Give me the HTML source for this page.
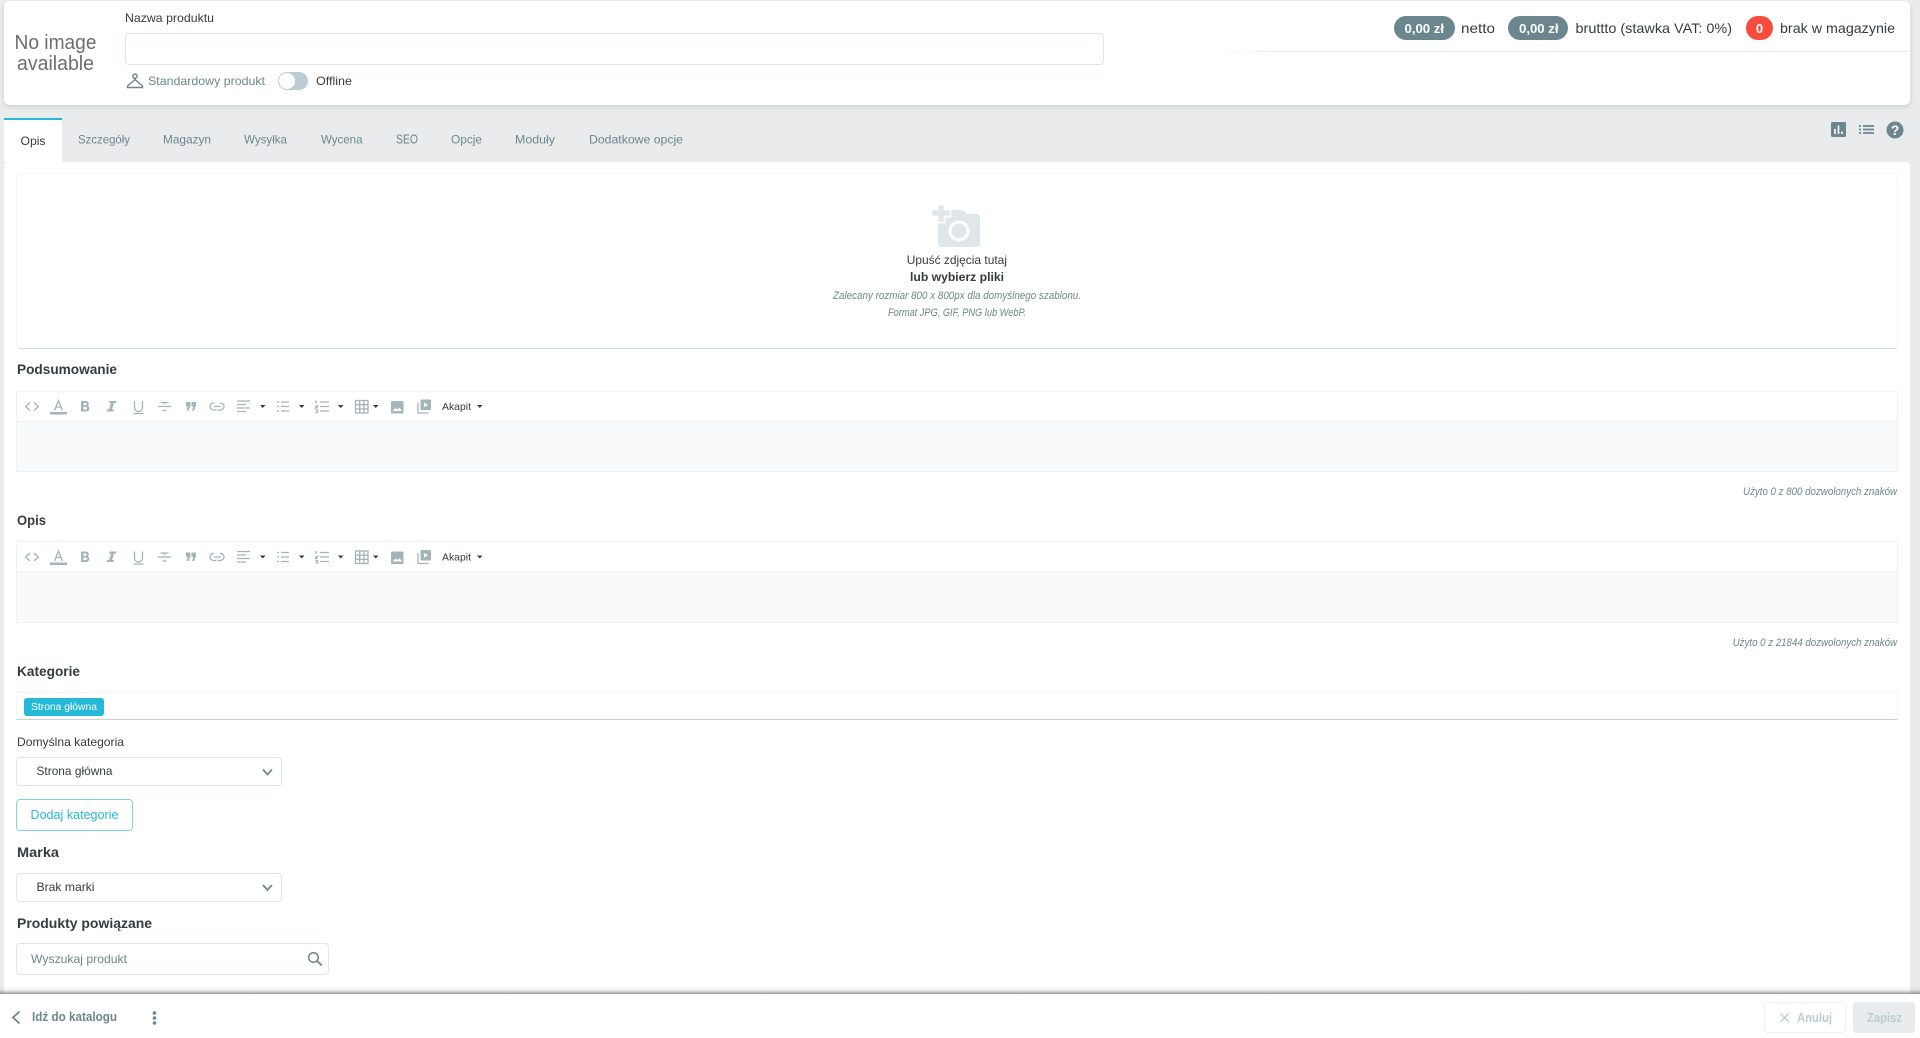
<!DOCTYPE html>
<html lang="pl"><head><meta charset="utf-8"><title>Produkt</title>
<style>
html,body{margin:0;padding:0;width:1920px;height:1038px;overflow:hidden;background:#eaebec;font-family:"Liberation Sans","DejaVu Sans",sans-serif}
.b{position:absolute;box-sizing:border-box}
svg{position:absolute;left:0;top:0}
text{font-family:"Liberation Sans","DejaVu Sans",sans-serif;fill:#363a41}
.g{fill:#6c868e}.w{fill:#fff}.h{font-weight:700;font-size:14px;fill:#363a41}
.i{font-style:italic;font-size:11px;fill:#6c868e}
.tb path,.tb rect,.tb line,.tb circle{stroke:#a3b4ba;fill:none;stroke-width:1.3}
.tb .f{fill:#a3b4ba;stroke:none}
.c{fill:#363a41;stroke:none}
</style></head><body>
<div class="b" style="left:4px;top:1px;width:1906px;height:104px;background:#fff;border-radius:5px;box-shadow:0 2px 5px rgba(0,0,0,.12)"></div>
<div class="b" style="left:1212px;top:51px;width:696px;height:1px;background:linear-gradient(90deg,#fff,#e3e8ea 12%)"></div>
<div class="b" style="left:125px;top:33px;width:979px;height:32px;border:1px solid #dde6e9;border-radius:4px;background:#fff"></div>
<div class="b" style="left:278px;top:72px;width:30px;height:18px;border-radius:9px;background:#bbcdd2"></div>
<div class="b" style="left:279px;top:73px;width:16px;height:16px;border-radius:50%;background:#fff"></div>
<div class="b" style="left:1394px;top:16px;width:61px;height:24px;border-radius:12px;background:#6c868e"></div>
<div class="b" style="left:1508px;top:16px;width:60px;height:24px;border-radius:12px;background:#6c868e"></div>
<div class="b" style="left:1746px;top:16px;width:27px;height:24px;border-radius:12px;background:#f54c3e"></div>
<div class="b" style="left:4px;top:162px;width:1906px;height:840px;background:#fff;border-radius:4px 4px 0 0"></div>
<div class="b" style="left:4px;top:118px;width:58px;height:44px;background:#fff;border-top:2px solid #25b9d7"></div>
<div class="b" style="left:16px;top:173px;width:1882px;height:176px;border:1px solid #f3f4f5;border-bottom:1px solid #d5e0e3;border-radius:4px"></div>
<div class="b" style="left:16px;top:391px;width:1882px;height:81px;border:1px solid #f1f1f1;border-radius:2px"></div>
<div class="b" style="left:17px;top:421px;width:1880px;height:50px;background:#f9fafb;border-top:1px solid #f1f1f1"></div>
<div class="b" style="left:16px;top:541px;width:1882px;height:82px;border:1px solid #f1f1f1;border-radius:2px"></div>
<div class="b" style="left:17px;top:571px;width:1880px;height:51px;background:#f9fafb;border-top:1px solid #f1f1f1"></div>
<div class="b" style="left:16px;top:692px;width:1882px;height:28px;border:1px solid #f3f4f5;border-bottom:1px solid #c6d4d8"></div>
<div class="b" style="left:24px;top:698px;width:80px;height:18px;background:#25b9d7;border-radius:3px"></div>
<div class="b" style="left:16px;top:757px;width:266px;height:29px;border:1px solid #dde6e9;border-radius:4px"></div>
<div class="b" style="left:16px;top:799px;width:117px;height:32px;border:1px solid #7fd3e5;border-radius:4px"></div>
<div class="b" style="left:16px;top:873px;width:266px;height:29px;border:1px solid #dde6e9;border-radius:4px"></div>
<div class="b" style="left:16px;top:943px;width:313px;height:32px;border:1px solid #dde6e9;border-radius:4px"></div>
<div class="b" style="left:0;top:986px;width:1920px;height:8px;background:linear-gradient(180deg,rgba(90,90,90,0),rgba(90,90,90,.08) 50%,rgba(90,90,90,.6))"></div>
<div class="b" style="left:0;top:994px;width:1920px;height:44px;background:#fff"></div>
<div class="b" style="left:1764px;top:1002px;width:82px;height:31px;border:1px solid #f1f1f1;border-radius:4px"></div>
<div class="b" style="left:1853px;top:1002px;width:62px;height:31px;background:#eaebec;border-radius:4px"></div>

<svg width="1920" height="1038" viewBox="0 0 1920 1038">
<text x="55.5" y="49" font-size="20" text-anchor="middle" style="fill:#6e6e6e" textLength="82" lengthAdjust="spacingAndGlyphs">No image</text>
<text x="55.5" y="70" font-size="20" text-anchor="middle" style="fill:#6e6e6e" textLength="77" lengthAdjust="spacingAndGlyphs">available</text>
<text x="125" y="22" font-size="12" textLength="89" lengthAdjust="spacingAndGlyphs">Nazwa produktu</text>
<path d="M135 78.5a2.2 2.2 0 1 1 2.2-2.2c0 1.2-2.2 1.6-2.2 3.2M135 79.5l-7.5 6.5v1.5h15V86z" fill="none" stroke="#6c868e" stroke-width="1.4"/>
<text class="g" x="148" y="85" font-size="12" textLength="117" lengthAdjust="spacingAndGlyphs">Standardowy produkt</text>
<text x="316" y="85" font-size="12" textLength="36" lengthAdjust="spacingAndGlyphs">Offline</text>

<text x="1404.5" y="33" font-size="13" font-weight="700" textLength="39.5" lengthAdjust="spacingAndGlyphs" style="fill:#fff">0,00 zł</text>
<text x="1461" y="33" font-size="14" textLength="34" lengthAdjust="spacingAndGlyphs">netto</text>
<text x="1519" y="33" font-size="13" font-weight="700" textLength="39.5" lengthAdjust="spacingAndGlyphs" style="fill:#fff">0,00 zł</text>
<text x="1575.5" y="33" font-size="14" textLength="156.5" lengthAdjust="spacingAndGlyphs">bruttto (stawka VAT: 0%)</text>
<text x="1759.5" y="33" font-size="13" font-weight="700" text-anchor="middle" style="fill:#fff">0</text>
<text x="1780" y="33" font-size="14" textLength="115" lengthAdjust="spacingAndGlyphs">brak w magazynie</text>

<text x="20.5" y="145" font-size="12" textLength="25" lengthAdjust="spacingAndGlyphs">Opis</text>
<g class="tabs" font-size="12">
<text class="g" x="78" y="143.5" textLength="52" lengthAdjust="spacingAndGlyphs">Szczegóły</text>
<text class="g" x="163" y="143.5" textLength="48" lengthAdjust="spacingAndGlyphs">Magazyn</text>
<text class="g" x="244" y="143.5" textLength="43" lengthAdjust="spacingAndGlyphs">Wysyłka</text>
<text class="g" x="321" y="143.5" textLength="41.5" lengthAdjust="spacingAndGlyphs">Wycena</text>
<text class="g" x="396" y="143.5" textLength="22" lengthAdjust="spacingAndGlyphs" font-size="12.5">SEO</text>
<text class="g" x="451" y="143.5" textLength="31" lengthAdjust="spacingAndGlyphs">Opcje</text>
<text class="g" x="515" y="143.5" textLength="40" lengthAdjust="spacingAndGlyphs">Moduły</text>
<text class="g" x="589" y="143.5" textLength="94" lengthAdjust="spacingAndGlyphs">Dodatkowe opcje</text>
</g>
<!-- top right icons -->
<rect x="1831" y="122" width="15" height="15" rx="1.5" fill="#6c868e"/>
<path d="M1835 134v-5M1838.5 134v-8.5M1842 134v-2.5" stroke="#fff" stroke-width="1.6" fill="none"/>
<path d="M1859 126h2M1859 129.5h2M1859 133h2M1863 126h11M1863 129.5h11M1863 133h11" stroke="#6c868e" stroke-width="1.7" fill="none"/>
<circle cx="1895" cy="130" r="8.5" fill="#6c868e"/>
<text x="1895" y="135" font-size="14" font-weight="700" text-anchor="middle" style="fill:#fff">?</text>

<!-- camera -->
<path d="M938 214h11v-4h14l4 4h10a3 3 0 0 1 3 3v27a3 3 0 0 1-3 3h-36a3 3 0 0 1-3-3z" fill="#dfe7ea"/>
<path d="M937 204h7v5h6v7h-6v6h-7v-6h-6v-7h6z" fill="#dfe7ea" stroke="#fff" stroke-width="1.5" transform="translate(.5 .5)"/>
<circle cx="959" cy="231" r="9" fill="#dfe7ea" stroke="#fff" stroke-width="3"/>
<text x="906.7" y="264" font-size="12" textLength="100.3" lengthAdjust="spacingAndGlyphs">Upuść zdjęcia tutaj</text>
<text x="910" y="281" font-size="12" font-weight="700" textLength="94" lengthAdjust="spacingAndGlyphs">lub wybierz pliki</text>
<text class="i" x="833" y="299" font-size="10" textLength="248" lengthAdjust="spacingAndGlyphs">Zalecany rozmiar 800 x 800px dla domyślnego szablonu.</text>
<text class="i" x="888" y="316" font-size="10" textLength="138" lengthAdjust="spacingAndGlyphs">Format JPG, GIF, PNG lub WebP.</text>

<text class="h" x="17" y="374" textLength="100" lengthAdjust="spacingAndGlyphs">Podsumowanie</text>
<text class="i" x="1743" y="495" textLength="154" lengthAdjust="spacingAndGlyphs">Użyto 0 z 800 dozwolonych znaków</text>
<text class="h" x="17" y="525" textLength="29" lengthAdjust="spacingAndGlyphs">Opis</text>
<text class="i" x="1732.7" y="646" textLength="164.3" lengthAdjust="spacingAndGlyphs">Użyto 0 z 21844 dozwolonych znaków</text>

<defs>
<g id="tb" class="tb">
<path d="M30 402.5l-4.5 4 4.5 4M34 402.5l4.500 4-4.500 4" stroke-width="1.500"/>
<path d="M54.500 410.500l4-10 4 10M56 407h5" stroke-width="1.400"/>
<rect class="f" x="50" y="412" width="17" height="2.500"/>
<path class="f" d="M81 401h5a2.800 2.800 0 0 1 1.800 4.900 3 3 0 0 1-1.300 5.600H81zM83.500 403v2.300h2a1.150 1.150 0 0 0 0-2.300zM83.500 407v2.500h2.300a1.250 1.250 0 0 0 0-2.500z" fill-rule="evenodd"/>
<path class="f" d="M109.500 401h7l-.5 2h-2l-2 6.500h2l-.5 2h-7l.5-2h2l2-6.500h-2z"/>
<path d="M134.500 401v6.500a4 4 0 0 0 8 0v-6.500M133.500 413.500h10"/>
<path d="M158 406.500h13M160.500 402.500h8M164.500 402.500v2M162.500 410.500h4" stroke-width="1.800"/>
<path class="f" d="M186 402h4.500v4l-2 4.500h-2l1.300-4h-1.800zM191.500 402h4.500v4l-2 4.500h-2l1.300-4h-1.800z"/>
<path d="M214 403h-.5a3.500 3.500 0 0 0 0 7h3M220 403h.5a3.500 3.500 0 0 1 0 7h-3M214 406.500h6.500"/>
<path d="M237 401h13M237 404.500h9M237 408h13M237 411.500h9" stroke-width="1.300"/>
<path class="c" d="M260 405h5.500l-2.750 3z" style="fill:#363a41;stroke:none"/>
<path d="M281 402h8M281 406.500h8M281 411h8M277 402h2M277 406.500h2M277 411h2"/>
<path class="c" d="M299 405h5.500l-2.750 3z" style="fill:#363a41;stroke:none"/>
<path d="M320 402h9M320 406.500h9M320 411h9M316 400.500v3M315.500 406h2l-2 2h2M315.500 410h2v2.500h-2"/>
<path class="c" d="M338 405h5.500l-2.750 3z" style="fill:#363a41;stroke:none"/>
<rect x="355.500" y="400.500" width="12.500" height="12.500"/>
<path d="M359.700 400.500v12.500M363.900 400.500v12.500M355.500 404.700h12.500M355.500 408.900h12.500"/>
<path class="c" d="M373 405h5.500l-2.750 3z" style="fill:#363a41;stroke:none"/>
<rect class="f" x="391" y="401" width="12.500" height="12.500" rx="1"/>
<path d="M392.500 411l3-3 2 1.500 2-2 2.500 3.500z" style="fill:#fff;stroke:none"/>
<rect class="f" x="420.500" y="399.500" width="10.500" height="10.500" rx="1"/>
<path d="M418 402.500v10.500h10.500" stroke-width="1.400"/>
<path d="M424 402.500l4 2.300-4 2.300z" style="fill:#fff;stroke:none"/>
<text x="442" y="410" font-size="10.500" textLength="29" lengthAdjust="spacingAndGlyphs">Akapit</text>
<path class="c" d="M477 405h5.500l-2.750 3z" style="fill:#363a41;stroke:none"/>
</g>
</defs>
<use href="#tb"/>
<use href="#tb" y="150.500"/>

<text class="h" x="17" y="676" textLength="63" lengthAdjust="spacingAndGlyphs">Kategorie</text>
<text x="31" y="710" font-size="10.500" style="fill:#fff" textLength="66" lengthAdjust="spacingAndGlyphs">Strona główna</text>
<text x="17" y="746" font-size="12" textLength="107" lengthAdjust="spacingAndGlyphs">Domyślna kategoria</text>
<text x="36.500" y="775" font-size="12" textLength="76" lengthAdjust="spacingAndGlyphs">Strona główna</text>
<path d="M263 769.500l4.500 5 4.500-5" fill="none" stroke="#6c868e" stroke-width="1.700"/>
<text x="30.500" y="819" font-size="12.500" style="fill:#25b9d7" textLength="88" lengthAdjust="spacingAndGlyphs">Dodaj kategorie</text>
<text class="h" x="17" y="857" textLength="42" lengthAdjust="spacingAndGlyphs">Marka</text>
<text x="36.500" y="891" font-size="12" textLength="58" lengthAdjust="spacingAndGlyphs">Brak marki</text>
<path d="M263 885l4.500 5 4.500-5" fill="none" stroke="#6c868e" stroke-width="1.700"/>
<text class="h" x="17" y="928" textLength="135" lengthAdjust="spacingAndGlyphs">Produkty powiązane</text>
<text class="g" x="31" y="963" font-size="12" textLength="96" lengthAdjust="spacingAndGlyphs">Wyszukaj produkt</text>
<circle cx="313.500" cy="957.500" r="4.800" fill="none" stroke="#6c868e" stroke-width="1.500"/>
<path d="M317 961l5 4.500" stroke="#6c868e" stroke-width="1.800" fill="none"/>

<path d="M19.500 1011.500l-6.500 6 6.500 6" fill="none" stroke="#6c868e" stroke-width="1.800"/>
<text x="32" y="1021" font-size="12.500" font-weight="700" style="fill:#6c868e" textLength="85" lengthAdjust="spacingAndGlyphs">Idź do katalogu</text>
<circle cx="154.500" cy="1013" r="1.800" fill="#6c868e"/><circle cx="154.500" cy="1018" r="1.800" fill="#6c868e"/><circle cx="154.500" cy="1023" r="1.800" fill="#6c868e"/>
<path d="M1780.500 1013.500l8.500 8.500M1789 1013.500l-8.500 8.500" stroke="#bbcdd2" stroke-width="1.300" fill="none"/>
<text x="1797" y="1022" font-size="12.500" font-weight="700" style="fill:#bbcdd2" textLength="35" lengthAdjust="spacingAndGlyphs">Anuluj</text>
<text x="1867" y="1022" font-size="12.500" font-weight="700" style="fill:#b7ced3" textLength="35" lengthAdjust="spacingAndGlyphs">Zapisz</text>
</svg>
</body></html>
